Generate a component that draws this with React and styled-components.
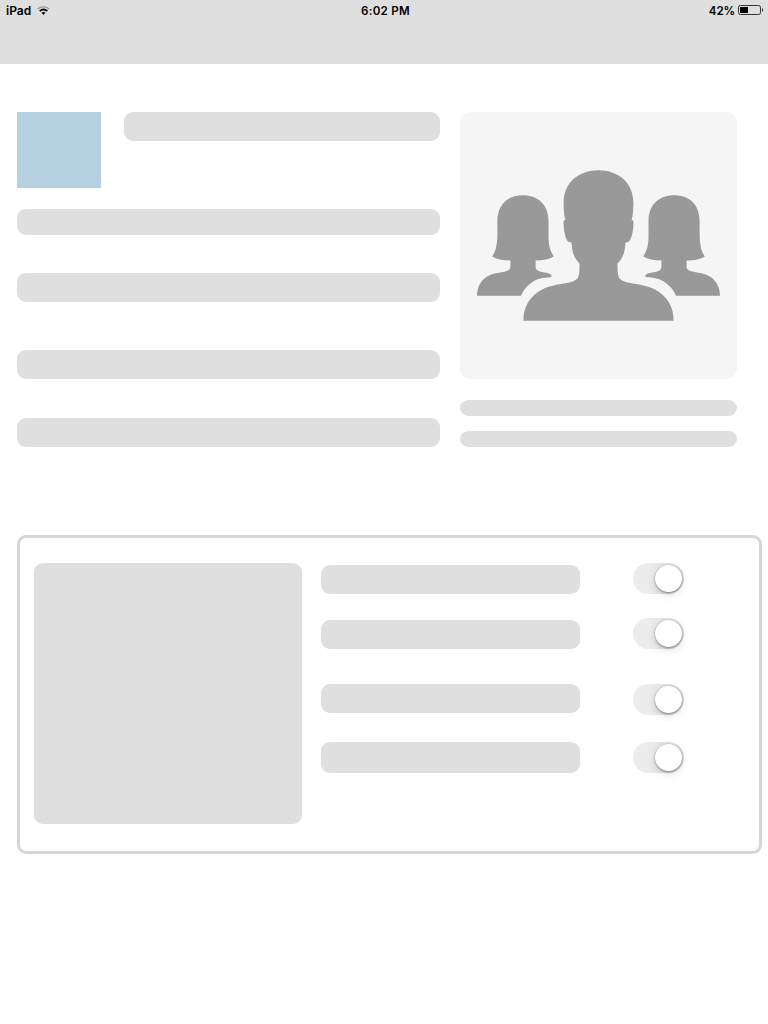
import React from 'react';
import styled, { createGlobalStyle } from 'styled-components';

const GlobalStyle = createGlobalStyle`
  * { box-sizing: border-box; }
  body { margin: 0; background: #fff; font-family: Inter, "Liberation Sans", sans-serif; }
`;

const Screen = styled.div`
  width: 768px;
  height: 1024px;
  overflow: hidden;
  background: #fff;
`;

const Header = styled.header`
  height: 64px;
  background: #dfdfdf;
`;

const StatusBar = styled.div`
  display: grid;
  grid-template-columns: 1fr auto 1fr;
  align-items: center;
  height: 20px;
  padding: 2px 5px 0 6px;
  color: #000;
  font-size: 12px;
  line-height: 18px;
  font-weight: 600;
`;

const StatusGroup = styled.div`
  display: flex;
  align-items: center;
  justify-content: ${(p) => (p.$end ? 'flex-end' : 'flex-start')};
  gap: ${(p) => (p.$end ? 3 : 6)}px;
  white-space: nowrap;
`;

const Clock = styled.span`
  padding-left: 2px;
  font-size: 11.6px;
  letter-spacing: 0.25px;
`;

const Charge = styled.span`
  font-size: 11.6px;
  letter-spacing: -0.15px;
`;

const StatusIcon = styled.svg`
  display: block;
  margin-top: -3px;
`;

const Profile = styled.section`
  display: flex;
  gap: 20px;
  padding: 48px 31px 0 17px;
`;

const Details = styled.div`
  width: 423px;
`;

const Intro = styled.div`
  display: flex;
  gap: 23px;
  margin-bottom: 21px;
`;

const Thumbnail = styled.div`
  width: 84px;
  height: 76px;
  background: #b5d0de;
`;

const Bar = styled.div`
  width: ${(p) => p.$width || '100%'};
  height: ${(p) => p.$height || 29}px;
  margin-bottom: ${(p) => p.$after || 0}px;
  border-radius: ${(p) => p.$radius || '9px'};
  background: #dfdfdf;
`;

const Side = styled.div`
  width: 277px;
`;

const GroupCard = styled.div`
  height: 267px;
  margin-bottom: 21px;
  border-radius: 10px;
  background: #f5f5f5;
`;

const GroupIcon = styled.svg`
  display: block;
  fill: #999;
`;

const Settings = styled.section`
  display: flex;
  gap: 19px;
  width: 745px;
  height: 319px;
  margin: 88px 0 0 17px;
  padding: 25px 14px;
  border: 3px solid #d6d6d6;
  border-radius: 9px;
`;

const Preview = styled.div`
  width: 268px;
  height: 261px;
  border-radius: 9px;
  background: #dfdfdf;
`;

const Options = styled.div`
  width: 363px;
`;

const Option = styled.div`
  display: flex;
  align-items: flex-start;
  gap: 53px;
  height: ${(p) => p.$height}px;
`;

const OptionLabel = styled(Bar)`
  margin-top: ${(p) => p.$top}px;
`;

const Switch = styled.button`
  display: flex;
  justify-content: flex-end;
  width: 51px;
  height: 31px;
  padding: 2px;
  border: 0;
  border-radius: 16px;
  background: linear-gradient(90deg, #ececec 0 30%, #e4e4e4 60%, #dadada);
`;

const Knob = styled.span`
  width: 27px;
  height: 27px;
  border-radius: 50%;
  background: #fff;
  box-shadow: 0 0 1px 0.5px rgba(0, 0, 0, 0.12), 0 1.5px 2px rgba(0, 0, 0, 0.24),
    0 3px 8px rgba(0, 0, 0, 0.12);
`;

const woman =
  'M17 183.7C17.2 171.5 24 165.2 32 162.3C40.5 159.4 50.4 160.4 50.4 155V148.5C43 148.4 36.5 147.3 32.2 144.5C36.2 138.5 37.4 131 37.4 120V109C37.4 93 47 83.2 62.7 83.2C78.4 83.2 88.5 93 88.5 109V120C88.3 132 89.2 137.5 93.8 144.5C89.5 147.3 83.5 148.4 75.6 148.5V155C75.8 162.2 90.8 158.8 91.7 164.2C91.6 166.5 81.5 164 73.5 169.3C67.5 173.3 63.3 178 61 183.7Z';

const manHalf =
  'M139 58.2C117.5 58.2 103.6 71.5 103.6 91C103.6 98 104.2 104 105.4 108.1C103.8 107.8 103.3 109.2 103.5 112C103.9 118.5 105.2 125.8 107.4 128.8C108.4 130.2 109.7 130.4 111.5 130.3C111.9 139.2 113.8 146.2 119.5 151.4C119.5 157 119.5 161.5 118.3 165C114.5 173 97 170 82.5 177.3C69.2 184 63.4 195.5 63.4 208.7H139Z';

function WifiIcon() {
  return (
    <StatusIcon width="13" height="10" viewBox="0 0 13 10" fill="none">
      <path d="M.7 3.9C4 1.3 9 1.3 12.3 3.9" stroke="#999" strokeWidth="1.3" />
      <path d="M2.7 6C4.9 4.2 8.1 4.2 10.3 6" stroke="#000" strokeWidth="1.8" />
      <path d="M4.6 7.8C5.7 6.8 7.3 6.8 8.4 7.8L6.5 9.9Z" fill="#000" />
    </StatusIcon>
  );
}

function BatteryIcon() {
  return (
    <StatusIcon width="25" height="10" viewBox="0 0 25 10">
      <rect x="0.5" y="0.5" width="22" height="9" rx="1.8" fill="none" stroke="#333" />
      <rect x="2" y="2" width="8" height="6" fill="#000" />
      <path d="M24 3Q25 3.3 25 5T24 7Z" fill="#222" />
    </StatusIcon>
  );
}

const options = [
  { height: 55, top: 2, bar: 29 },
  { height: 66, top: 2, bar: 29 },
  { height: 58, top: 0, bar: 29 },
  { height: 31, top: 0, bar: 31 },
];

export default function App() {
  return (
    <Screen>
      <GlobalStyle />
      <Header>
        <StatusBar>
          <StatusGroup>
            <span>iPad</span>
            <WifiIcon />
          </StatusGroup>
          <Clock>6:02 PM</Clock>
          <StatusGroup $end>
            <Charge>42%</Charge>
            <BatteryIcon />
          </StatusGroup>
        </StatusBar>
      </Header>
      <Profile>
        <Details>
          <Intro>
            <Thumbnail />
            <Bar $width="316px" />
          </Intro>
          <Bar $height={26} $after={38} />
          <Bar $after={48} />
          <Bar $after={39} />
          <Bar />
        </Details>
        <Side>
          <GroupCard>
            <GroupIcon width="277" height="267" viewBox="0 0 277 267">
              <path d={woman} />
              <path d={woman} transform="matrix(-1 0 0 1 277 0)" />
              <path d={manHalf} />
              <path d={manHalf} transform="matrix(-1 0 0 1 277 0)" />
            </GroupIcon>
          </GroupCard>
          <Bar $height={16} $radius="9px / 8px" $after={15} />
          <Bar $height={16} $radius="9px / 8px" />
        </Side>
      </Profile>
      <Settings>
        <Preview />
        <Options>
          {options.map((option, index) => (
            <Option key={index} $height={option.height}>
              <OptionLabel $width="259px" $height={option.bar} $top={option.top} />
              <Switch role="switch" aria-checked="true">
                <Knob />
              </Switch>
            </Option>
          ))}
        </Options>
      </Settings>
    </Screen>
  );
}
